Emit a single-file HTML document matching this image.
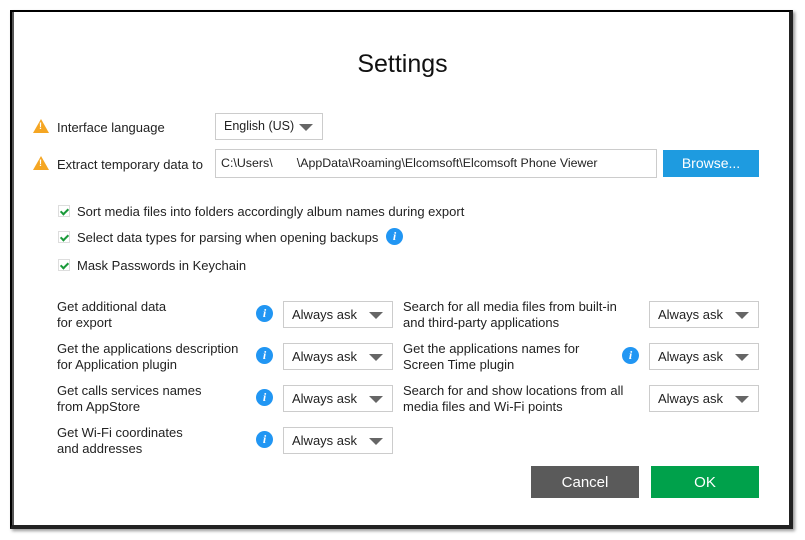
<!DOCTYPE html>
<html><head><style>
body{margin:0;width:805px;height:540px;background:#fff;position:relative;font-family:"Liberation Sans",sans-serif;font-size:13px;color:#222;overflow:hidden}
.frame{position:absolute;left:10px;top:10px;width:777px;height:513px;border:2px solid #000;border-right:4px solid #222;border-bottom:4px solid #222;box-shadow:2px 2px 3px rgba(0,0,0,.4)}
.inner{position:absolute;left:12px;top:12px;width:2px;height:513px;background:#555}
.a{position:absolute;white-space:nowrap}
.sel{position:absolute;border:1px solid #ccc;box-sizing:border-box;height:27px;line-height:25px;padding-left:8px;background:#fff}
.sel:after{content:"";position:absolute;right:9px;top:10px;border-left:7px solid transparent;border-right:7px solid transparent;border-top:7px solid #666}
.nop:after{display:none}
.info{position:absolute;width:17px;height:17px;border-radius:50%;background:#2196f3;color:#fff;font:italic bold 12px "Liberation Serif",serif;text-align:center;line-height:17px}
.cb{position:absolute;width:12px;height:12px;border:1px solid #ddd;box-sizing:border-box}
.cb:after{content:"";position:absolute;left:3px;top:1px;width:3px;height:6px;border:solid #1a9a3a;border-width:0 2px 2px 0;transform:rotate(45deg)}
.warn{position:absolute;width:0;height:0;border-left:8px solid transparent;border-right:8px solid transparent;border-bottom:14px solid #f5a623}
.warn:after{content:"!";position:absolute;left:-2px;top:2px;font:bold 9px sans-serif;color:#fff}
.l2{line-height:16px}
</style></head><body>
<div class="frame"></div><div class="inner"></div>
<div class="a" style="left:0;width:805px;text-align:center;top:50px;font-size:25px;color:#111">Settings</div>
<div class="warn" style="left:33px;top:119px"></div>
<div class="a" style="left:57px;top:120px">Interface language</div>
<div class="sel" style="left:215px;top:113px;width:108px;font-size:12.5px">English (US)</div>
<div class="warn" style="left:33px;top:156px"></div>
<div class="a" style="left:57px;top:157px">Extract temporary data to</div>
<div class="sel nop" style="left:215px;top:149px;width:442px;height:29px;line-height:27px;font-size:12.4px;padding-left:5px">C:\Users\<span style="color:#ccc">&nbsp;&nbsp;&nbsp;&nbsp;&nbsp;&nbsp;&nbsp;</span>\AppData\Roaming\Elcomsoft\Elcomsoft Phone Viewer</div>
<div class="a" style="left:663px;top:150px;width:96px;height:27px;background:#1e9be0;color:#fff;text-align:center;line-height:27px;font-size:14px">Browse...</div>
<div class="cb" style="left:58px;top:205px"></div><div class="a" style="left:77px;top:204px">Sort media files into folders accordingly album names during export</div>
<div class="cb" style="left:58px;top:231px"></div><div class="a" style="left:77px;top:230px">Select data types for parsing when opening backups</div>
<div class="info" style="left:386px;top:228px">i</div>
<div class="cb" style="left:58px;top:259px"></div><div class="a" style="left:77px;top:258px">Mask Passwords in Keychain</div>

<div class="a l2" style="left:57px;top:299px">Get additional data<br>for export</div>
<div class="info" style="left:256px;top:305px">i</div><div class="sel" style="left:283px;top:301px;width:110px">Always ask</div>
<div class="a l2" style="left:57px;top:341px">Get the applications description<br>for Application plugin</div>
<div class="info" style="left:256px;top:347px">i</div><div class="sel" style="left:283px;top:343px;width:110px">Always ask</div>
<div class="a l2" style="left:57px;top:383px">Get calls services names<br>from AppStore</div>
<div class="info" style="left:256px;top:389px">i</div><div class="sel" style="left:283px;top:385px;width:110px">Always ask</div>
<div class="a l2" style="left:57px;top:425px">Get Wi-Fi coordinates<br>and addresses</div>
<div class="info" style="left:256px;top:431px">i</div><div class="sel" style="left:283px;top:427px;width:110px">Always ask</div>

<div class="a l2" style="left:403px;top:299px">Search for all media files from built-in<br>and third-party applications</div>
<div class="sel" style="left:649px;top:301px;width:110px">Always ask</div>
<div class="a l2" style="left:403px;top:341px">Get the applications names for<br>Screen Time plugin</div>
<div class="info" style="left:622px;top:347px">i</div><div class="sel" style="left:649px;top:343px;width:110px">Always ask</div>
<div class="a l2" style="left:403px;top:383px">Search for and show locations from all<br>media files and Wi-Fi points</div>
<div class="sel" style="left:649px;top:385px;width:110px">Always ask</div>

<div class="a" style="left:531px;top:466px;width:108px;height:32px;background:#5a5a5a;color:#fff;text-align:center;line-height:34px;font-size:15px">Cancel</div>
<div class="a" style="left:651px;top:466px;width:108px;height:32px;background:#00a14b;color:#fff;text-align:center;line-height:34px;font-size:15px">OK</div>
</body></html>
